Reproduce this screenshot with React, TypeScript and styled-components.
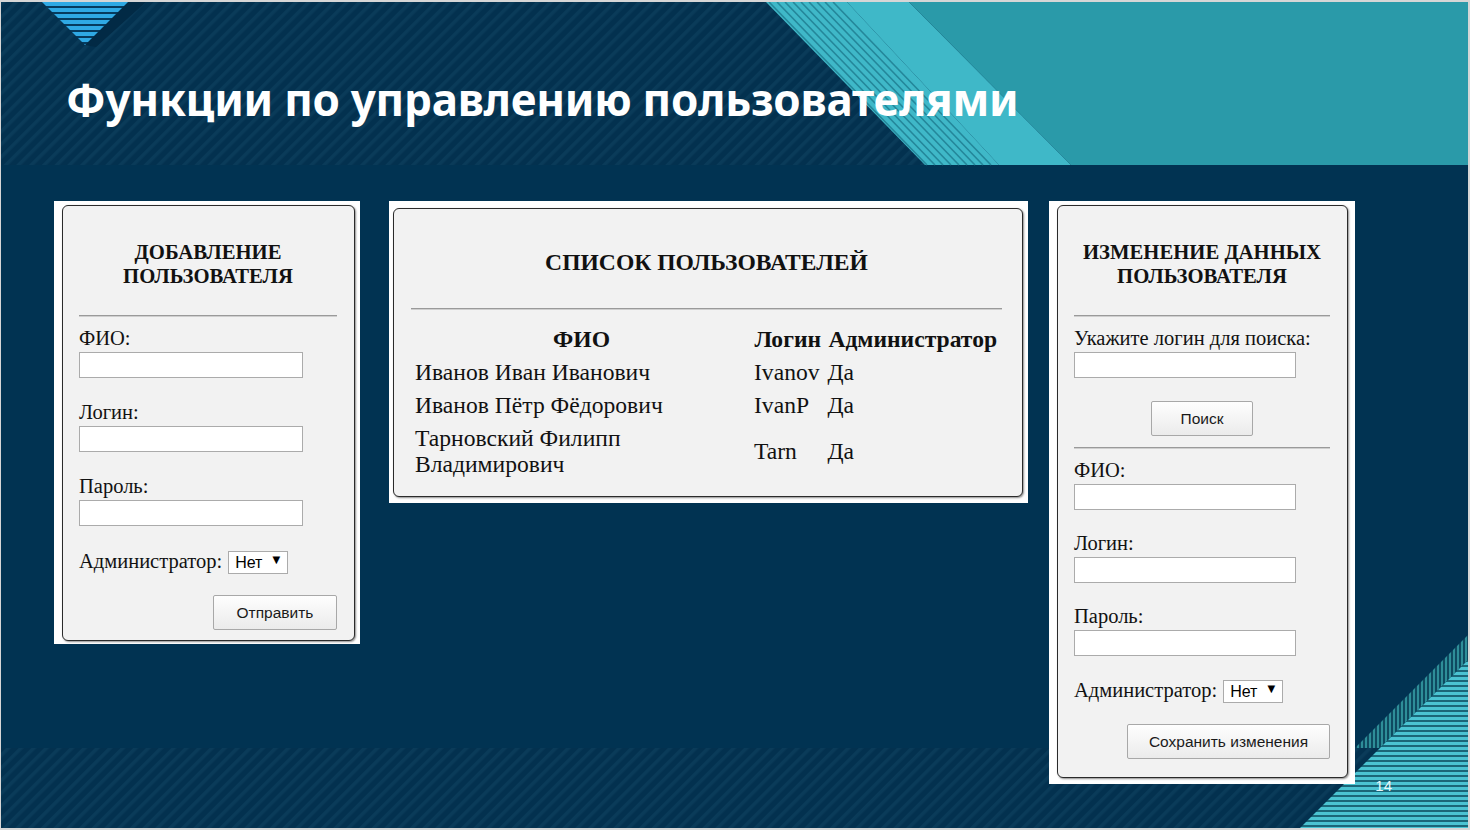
import React from "react";
import styled, { createGlobalStyle } from "styled-components";

const GlobalStyle = createGlobalStyle`
  html, body {
    margin: 0;
    padding: 0;
    background: #d6d6d6;
  }
  body {
    font-family: "Liberation Serif", "Times New Roman", serif;
    color: #111;
  }
`;

const Slide = styled.div`
  position: relative;
  width: 1467px;
  height: 826px;
  margin: 2px 0 0 1px;
  background: #013352;
  overflow: hidden;
  display: flex;
  flex-direction: column;
`;

const BackdropSvg = styled.svg`
  position: absolute;
  left: 0;
  top: 0;
  z-index: 0;
`;

const Header = styled.header`
  position: relative;
  z-index: 1;
  height: 163px;
  padding: 67px 0 0 65px;
  box-sizing: border-box;
`;

const Title = styled.h1`
  margin: 0;
  font-family: "Noto Sans", "Open Sans", sans-serif;
  font-weight: 700;
  font-size: 44px;
  line-height: 60px;
  color: #fff;
  letter-spacing: -0.25px;
`;

const Body = styled.main`
  position: relative;
  z-index: 1;
  display: flex;
  align-items: flex-start;
  padding: 36px 0 0 53px;
`;

const Frame = styled.section<{ $pad: string; $ml?: number }>`
  flex: none;
  background: #fff;
  padding: ${(p) => p.$pad};
  margin-left: ${(p) => p.$ml ?? 0}px;
`;

const Panel = styled.div<{ $w: number; $pad: string }>`
  width: ${(p) => p.$w}px;
  box-sizing: border-box;
  padding: ${(p) => p.$pad};
  background: #f2f2f2;
  border: 1px solid #2b2b2b;
  border-radius: 6px;
  box-shadow: 1px 1px 2px rgba(0, 0, 0, 0.45);
  display: flex;
  flex-direction: column;
`;

const Heading = styled.h2<{ $size?: number; $lh?: number }>`
  margin: 0;
  text-align: center;
  font-weight: 700;
  font-size: ${(p) => p.$size ?? 20.7}px;
  line-height: ${(p) => p.$lh ?? 24}px;
  text-transform: uppercase;
  color: #111;
  white-space: nowrap;
`;

const Divider = styled.hr<{ $mt: number; $mb: number }>`
  width: 100%;
  height: 0;
  margin: ${(p) => p.$mt}px 0 ${(p) => p.$mb}px;
  border: 0;
  border-top: 1px solid #9a9a9a;
  border-bottom: 1px solid #cfcfcf;
`;

const Field = styled.div<{ $gap: number }>`
  margin-bottom: ${(p) => p.$gap}px;
`;

const Label = styled.label`
  display: block;
  font-size: 20.5px;
  line-height: 23px;
  white-space: nowrap;
`;

const TextInput = styled.input<{ $w: number }>`
  display: block;
  box-sizing: border-box;
  width: ${(p) => p.$w}px;
  height: 26px;
  margin: 2px 0 0;
  border: 1px solid #ababab;
  background: #fff;
  font: 15px "Liberation Sans", Arial, sans-serif;
`;

const AdminRow = styled.div`
  display: flex;
  align-items: center;
  gap: 6px;
  height: 25px;
  font-size: 20.5px;
  line-height: 23px;
`;

const SelectBox = styled.div`
  position: relative;
  width: 60px;
  height: 23px;
`;

const Select = styled.select`
  appearance: none;
  width: 100%;
  height: 100%;
  box-sizing: border-box;
  margin: 0;
  padding: 0 0 0 6px;
  border: 1px solid #ababab;
  border-radius: 0;
  background: #fff;
  color: #000;
  font: 16px "Liberation Sans", Arial, sans-serif;
`;

const Arrow = styled.span`
  position: absolute;
  right: 8px;
  top: 4px;
  font: 10px "DejaVu Sans", sans-serif;
  color: #000;
  pointer-events: none;
`;

const Button = styled.button<{ $w: number; $align: string; $mt: number }>`
  align-self: ${(p) => p.$align};
  width: ${(p) => p.$w}px;
  height: 35px;
  margin-top: ${(p) => p.$mt}px;
  box-sizing: border-box;
  border: 1px solid #a8a8a8;
  border-radius: 2px;
  background: linear-gradient(#fefefe, #ebebeb);
  font: 15.5px "Liberation Sans", Arial, sans-serif;
  color: #1a1a1a;
  padding: 0;
`;

const Table = styled.table`
  margin-top: 11px;
  border-spacing: 2px 3px;
  font-size: 23.6px;
  line-height: 26px;
`;

const HeadCell = styled.th<{ $w?: number }>`
  padding: 2px 2px;
  font-weight: 700;
  text-align: center;
  white-space: nowrap;
  width: ${(p) => (p.$w ? `${p.$w}px` : "auto")};
`;

const Cell = styled.td`
  padding: 2px 2px;
  text-align: left;
  vertical-align: middle;
`;

const PageNumber = styled.div`
  position: absolute;
  right: 76px;
  bottom: 34px;
  z-index: 1;
  font: 15px "Liberation Sans", Arial, sans-serif;
  color: #e8f6f8;
`;

const Backdrop = () => (
  <BackdropSvg width={1467} height={826} viewBox="0 0 1467 826">
    <defs>
      <pattern id="diag" width="9" height="9" patternUnits="userSpaceOnUse" patternTransform="rotate(45)">
        <rect width="9" height="9" fill="#03314f" />
        <rect width="3.5" height="9" fill="#0a3b59" />
      </pattern>
      <pattern id="hblue" width="6" height="6" patternUnits="userSpaceOnUse">
        <rect width="6" height="6" fill="#063b5e" />
        <rect width="6" height="4" fill="#2fa9e4" />
      </pattern>
      <pattern id="hteal" width="5" height="5" patternUnits="userSpaceOnUse">
        <rect width="5" height="5" fill="#1b6678" />
        <rect width="5" height="3" fill="#4bc3d2" />
      </pattern>
      <pattern id="vteal" width="4" height="4" patternUnits="userSpaceOnUse">
        <rect width="4" height="4" fill="#0e4a60" />
        <rect width="2" height="4" fill="#2e8e99" />
      </pattern>
    </defs>
    <rect x="0" y="0" width="1467" height="163" fill="url(#diag)" />
    <rect x="0" y="746" width="1467" height="80" fill="url(#diag)" />

    <polygon points="765,0 846,0 998,163 924,163" fill="#3fb8c8" />
    {Array.from({ length: 9 }).map((_, i) => (
      <line
        key={i}
        x1={768 + i * 8}
        y1={0}
        x2={926 + i * 8}
        y2={163}
        stroke="#24879a"
        strokeWidth={1.6}
      />
    ))}
    <polygon points="846,0 908,0 1070,163 998,163" fill="#3fb8c8" />
    <polygon points="908,0 1467,0 1467,163 1070,163" fill="#2a9aa9" />

    <polygon points="127,0 145,0 95,45 84,43" fill="#022a45" />
    <polygon points="41,0 127,0 84,43" fill="url(#hblue)" />

    <polygon points="1354,746 1467,633 1467,658 1379,746" fill="url(#vteal)" />
    <polygon points="1299,826 1467,658 1467,826" fill="url(#hteal)" />
  </BackdropSvg>
);

const AdminSelect = () => (
  <AdminRow>
    <span>Администратор:</span>
    <SelectBox>
      <Select defaultValue="no">
        <option value="no">Нет</option>
        <option value="yes">Да</option>
      </Select>
      <Arrow>▼</Arrow>
    </SelectBox>
  </AdminRow>
);

const users = [
  { name: "Иванов Иван Иванович", login: "Ivanov", admin: "Да" },
  { name: "Иванов Пётр Фёдорович", login: "IvanP", admin: "Да" },
  { name: "Тарновский Филипп Владимирович", login: "Tarn", admin: "Да" },
];

export default function App() {
  return (
    <>
      <GlobalStyle />
      <Slide>
        <Backdrop />
        <Header>
          <Title>Функции по управлению пользователями</Title>
        </Header>
        <Body>
          <Frame $pad="4px 5px 3px 8px">
            <Panel $w={293} $pad="34px 17px 10px 16px">
              <Heading>
                Добавление
                <br />
                пользователя
              </Heading>
              <Divider $mt={27} $mb={10} />
              <Field $gap={23}>
                <Label>ФИО:</Label>
                <TextInput $w={224} />
              </Field>
              <Field $gap={23}>
                <Label>Логин:</Label>
                <TextInput $w={224} />
              </Field>
              <Field $gap={23}>
                <Label>Пароль:</Label>
                <TextInput $w={224} type="password" />
              </Field>
              <AdminSelect />
              <Button $w={124} $align="flex-end" $mt={21}>
                Отправить
              </Button>
            </Panel>
          </Frame>

          <Frame $pad="7px 5px 6px 4px" $ml={29}>
            <Panel $w={630} $pad="40px 20px 14px 17px">
              <Heading $size={23.6} $lh={26}>
                Список пользователей
              </Heading>
              <Divider $mt={33} $mb={0} />
              <Table>
                <thead>
                  <tr>
                    <HeadCell $w={333}>ФИО</HeadCell>
                    <HeadCell>Логин</HeadCell>
                    <HeadCell>Администратор</HeadCell>
                  </tr>
                </thead>
                <tbody>
                  {users.map((u) => (
                    <tr key={u.login}>
                      <Cell>{u.name}</Cell>
                      <Cell>{u.login}</Cell>
                      <Cell>{u.admin}</Cell>
                    </tr>
                  ))}
                </tbody>
              </Table>
            </Panel>
          </Frame>

          <Frame $pad="4px 7px 6px 8px" $ml={21}>
            <Panel $w={291} $pad="34px 17px 18px 16px">
              <Heading>
                Изменение данных
                <br />
                пользователя
              </Heading>
              <Divider $mt={27} $mb={10} />
              <Field $gap={0}>
                <Label>Укажите логин для поиска:</Label>
                <TextInput $w={222} />
              </Field>
              <Button $w={102} $align="center" $mt={23}>
                Поиск
              </Button>
              <Divider $mt={11} $mb={10} />
              <Field $gap={22}>
                <Label>ФИО:</Label>
                <TextInput $w={222} />
              </Field>
              <Field $gap={22}>
                <Label>Логин:</Label>
                <TextInput $w={222} />
              </Field>
              <Field $gap={22}>
                <Label>Пароль:</Label>
                <TextInput $w={222} type="password" />
              </Field>
              <AdminSelect />
              <Button $w={203} $align="flex-end" $mt={21}>
                Сохранить изменения
              </Button>
            </Panel>
          </Frame>
        </Body>
        <PageNumber>14</PageNumber>
      </Slide>
    </>
  );
}
